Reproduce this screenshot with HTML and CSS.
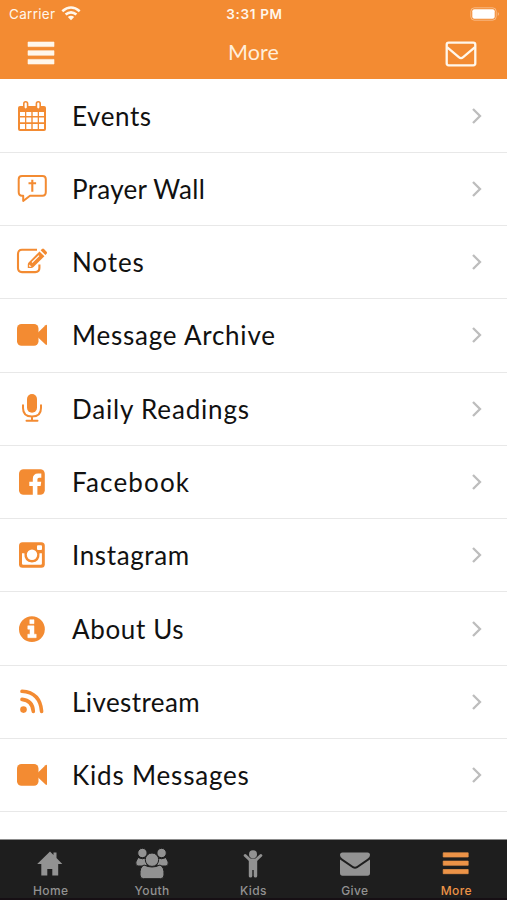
FILE: index.html
```html
<!DOCTYPE html>
<html lang="en">
<head>
<meta charset="utf-8">
<title>More</title>
<link rel="stylesheet" href="styles.css">
</head>
<body>
<svg class="defs" aria-hidden="true">
  <symbol id="video" viewBox="0 0 32 32"><rect x="1" y="5" width="21.5" height="21.7" rx="4.5" fill="currentColor"/><path d="M21 14.5L29.5 6.2Q31 5.2 31 7V25Q31 26.5 29.5 25.5L21 17.5Z" fill="currentColor"/></symbol>
</svg>
<div class="app">
  <header class="header">
    <div class="status">
      <div class="carrier"><span>Carrier</span>
        <svg class="wifi" viewBox="0 0 20 15"><path d="M1.3 5.2Q10-2.2 18.7 5.2M4.6 8.6Q10 4 15.4 8.6" fill="none" stroke="currentColor" stroke-width="2.6"/><path d="M6.8 11Q10 8.4 13.2 11L10 14.2Z" fill="currentColor"/></svg>
      </div>
      <div class="clock">3:31 PM</div>
      <svg class="battery" viewBox="0 0 30 14"><rect x=".8" y=".8" width="25.4" height="12.4" rx="3.6" fill="none" stroke="#fff" stroke-opacity=".4" stroke-width="1"/><rect x="2.3" y="2.2" width="22.4" height="9.6" rx="2" fill="#fff"/><path d="M27.8 5Q29.8 7 27.8 9Z" fill="#fff" opacity=".5"/></svg>
    </div>
    <nav class="navbar">
      <svg class="menu" viewBox="0 0 28 24"><path d="M1 1h26v4.6H1zM1 9.7h26v4.6H1zM1 18.4h26V23H1z" fill="currentColor" stroke="currentColor" stroke-width=".6" stroke-linejoin="round"/></svg>
      <h1 class="title">More</h1>
      <svg class="mail" viewBox="0 0 32 26"><rect x="1.7" y="1.7" width="28.6" height="22.6" rx="2" fill="none" stroke="currentColor" stroke-width="2.3"/><path d="M2 6.2L13.8 16.2Q16 18 18.2 16.2L30 6.2" fill="none" stroke="currentColor" stroke-width="2.3"/></svg>
    </nav>
  </header>
  <main class="list">
    <a class="row"><svg class="icon" viewBox="0 0 32 32"><path d="M4 6h24q2 0 2 2v21q0 2-2 2H4q-2 0-2-2V8q0-2 2-2Z" fill="currentColor"/><path d="M4 12h5v4H4zM10.3 12h5v4h-5zM16.7 12h5v4h-5zM23 12h5v4h-5zM4 17.5h5v4.7H4zM10.3 17.5h5v4.7h-5zM16.7 17.5h5v4.7h-5zM23 17.5h5v4.7h-5zM4 24h5v5H4zM10.3 24h5v5h-5zM16.7 24h5v5h-5zM23 24h5v5h-5z" fill="#fff"/><g fill="#fff" stroke="currentColor" stroke-width="1.6"><rect x="7.8" y="1.8" width="3.8" height="7.4" rx="1.9"/><rect x="20.4" y="1.8" width="3.8" height="7.4" rx="1.9"/></g></svg><span class="label events">Events</span><svg class="chevron" viewBox="0 0 12 18"><path d="M2 2L9 9L2 16"/></svg></a>
    <a class="row"><svg class="icon" viewBox="0 0 32 32"><path d="M6 3H26.5Q29.8 3 29.8 6.3V19Q29.8 22.7 26.5 22.7H14L7.2 28V22.7H6Q2.7 22.7 2.7 19V6.3Q2.7 3 6 3Z" fill="none" stroke="currentColor" stroke-width="2" stroke-linejoin="round"/><path d="M16.3 6.8V18.8M12.5 10.3H20.1" fill="none" stroke="currentColor" stroke-width="2.1"/></svg><span class="label prayer">Prayer Wall</span><svg class="chevron" viewBox="0 0 12 18"><path d="M2 2L9 9L2 16"/></svg></a>
    <a class="row"><svg class="icon" viewBox="0 0 32 32"><path d="M21 3.8H6Q2 3.8 2 8V22Q2 26.1 6 26.1H19.2Q23.4 26.1 23.4 22V18.6" fill="none" stroke="currentColor" stroke-width="2.1"/><path d="M23.5 5.4L28.4 10.3L17.2 21.3Q16.4 22 15.2 22H11.8V18.5Q11.8 17.2 12.6 16.4ZM24.6 4.3L26 3Q27 2.1 28 3L30.6 5.7Q31.5 6.7 30.6 7.7L29.4 9.1Z" fill="currentColor"/><path d="M16 16.5L23 9.6" stroke="#fff" stroke-width="1.1"/><path d="M13.2 18.5L15.6 20.8H13.2Z" fill="#fff"/></svg><span class="label notes">Notes</span><svg class="chevron" viewBox="0 0 12 18"><path d="M2 2L9 9L2 16"/></svg></a>
    <a class="row"><svg class="icon"><use href="#video"/></svg><span class="label archive">Message Archive</span><svg class="chevron" viewBox="0 0 12 18"><path d="M2 2L9 9L2 16"/></svg></a>
    <a class="row"><svg class="icon" viewBox="0 0 32 32"><rect x="11" y="1" width="10" height="18.8" rx="5" fill="currentColor"/><path d="M7 12.2V15Q7 23.6 16 23.6T25 15V12.2M16 23.6V27.5M10.5 27.7H21.5" fill="none" stroke="currentColor" stroke-width="2" stroke-linecap="round"/></svg><span class="label daily">Daily Readings</span><svg class="chevron" viewBox="0 0 12 18"><path d="M2 2L9 9L2 16"/></svg></a>
    <a class="row"><svg class="icon" viewBox="0 0 32 32"><rect x="3" y="3.3" width="25.8" height="25.5" rx="4.5" fill="currentColor"/><path d="M16.8 29V20H13.3V15.7H16.8V13Q16.8 7.5 22.2 7.5H25.3V11.7H23Q21.4 11.7 21.4 13.4V15.7H25.2L24.6 20H21.4V29Z" fill="#fff"/></svg><span class="label facebook">Facebook</span><svg class="chevron" viewBox="0 0 12 18"><path d="M2 2L9 9L2 16"/></svg></a>
    <a class="row"><svg class="icon" viewBox="0 0 32 32"><rect x="3" y="3.3" width="25.8" height="25.5" rx="3.5" fill="currentColor"/><path d="M6 14.2H8.4Q7.8 22.7 16 23.5Q24.2 22.7 23.5 14.2H25.9V24.6Q25.9 25.8 24.7 25.8H7.2Q6 25.8 6 24.6Z" fill="#fff"/><circle cx="16" cy="15.8" r="5.2" fill="#fff"/><rect x="21" y="6.3" width="5" height="4.8" rx="1" fill="#fff"/></svg><span class="label instagram">Instagram</span><svg class="chevron" viewBox="0 0 12 18"><path d="M2 2L9 9L2 16"/></svg></a>
    <a class="row"><svg class="icon" viewBox="0 0 32 32"><circle cx="15.9" cy="16.2" r="12.9" fill="currentColor"/><path d="M13.8 6.7h4.2v4h-4.2zM11.8 12.8H18V21.2H20.2V24.7H11.8V21.2H14V16.2H11.8Z" fill="#fff" stroke="#fff" stroke-width=".5" stroke-linejoin="round"/></svg><span class="label about">About Us</span><svg class="chevron" viewBox="0 0 12 18"><path d="M2 2L9 9L2 16"/></svg></a>
    <a class="row"><svg class="icon" viewBox="0 0 32 32"><circle cx="7.5" cy="23.6" r="3.3" fill="currentColor"/><path d="M6 13.4Q16.5 14.3 17.3 25.4M6 5.3Q24.2 6.5 25.6 25.4" fill="none" stroke="currentColor" stroke-width="3.6" stroke-linecap="round"/></svg><span class="label live">Livestream</span><svg class="chevron" viewBox="0 0 12 18"><path d="M2 2L9 9L2 16"/></svg></a>
    <a class="row"><svg class="icon"><use href="#video"/></svg><span class="label kids">Kids Messages</span><svg class="chevron" viewBox="0 0 12 18"><path d="M2 2L9 9L2 16"/></svg></a>
  </main>
  <nav class="tabs">
    <a class="tab"><svg viewBox="0 0 34 34"><path d="M16 3.5L19.5 7V4.5H22.5V10L28.3 16H24.2V27.5H18.3V21H13.3V27.5H7.3V16H3.2Z" fill="currentColor"/></svg><span>Home</span></a>
    <a class="tab"><svg viewBox="0 0 34 34"><g fill="currentColor" stroke="#1e1e1e" stroke-width="1"><circle cx="7.4" cy="5" r="4.7"/><circle cx="26.6" cy="5" r="4.7"/><path d="M3 9.5Q7.4 12 12 9.5V18H3Q.3 18 .8 14ZM31 9.5Q26.6 12 22 9.5V18H31Q33.7 18 33.2 14Z"/><path d="M9 17Q17 21 25 17Q29.5 19 29 27Q29 30.7 25.5 30.7H8.5Q5 30.7 5 27Q4.5 19 9 17Z"/><circle cx="17" cy="11.7" r="6.7"/></g></svg><span>Youth</span></a>
    <a class="tab"><svg viewBox="0 0 34 34"><circle cx="17" cy="6.3" r="4" fill="currentColor"/><path d="M9.2 7.5L14 12H20L24.8 7.5" fill="none" stroke="currentColor" stroke-width="3" stroke-linecap="round" stroke-linejoin="round"/><path d="M12.8 11H21.2V28Q21.2 29.5 19.5 29.5T17.7 28V22H16.3V28Q16.3 29.5 14.5 29.5T12.8 28Z" fill="currentColor"/></svg><span>Kids</span></a>
    <a class="tab"><svg viewBox="0 0 34 34"><path d="M4.5 4.5H29.5Q32 4.5 32 7Q32 9 29.5 10.8L19 18Q17 19.4 15 18L4.5 10.8Q2 9 2 7Q2 4.5 4.5 4.5ZM2 11.5L14.5 20Q17 21.5 19.5 20L32 11.5V25Q32 27.8 29.5 27.8H4.5Q2 27.8 2 25Z" fill="currentColor"/></svg><span>Give</span></a>
    <a class="tab active"><svg viewBox="0 0 34 34"><path d="M4.2 4.8h25v4.2h-25zM4.2 13.1h25v4.2h-25zM4.2 21.5h25v4.2h-25z" fill="currentColor" stroke="currentColor" stroke-width=".7" stroke-linejoin="round"/></svg><span>More</span></a>
  </nav>
</div>
</body>
</html>
```
FILE: styles.css
```css
* { box-sizing: border-box; }
body { margin: 0; background: #fff; font-family: Lato, "Liberation Sans", sans-serif; }
.defs { display: none; }
.app { display: flex; flex-direction: column; width: 507px; height: 900px; overflow: hidden; }
.header { height: 79px; background: #f38b32; color: #fff7ec; flex: none; }
.status { display: grid; grid-template-columns: 1fr auto 1fr; align-items: center; height: 27px; padding: 0 7px 0 9px; font-family: Inter, sans-serif; font-size: 13.5px; }
.carrier { display: flex; align-items: center; gap: 6px; letter-spacing: .3px; }
.wifi { width: 20px; height: 15px; margin-top: -1px; }
.clock { font-weight: 600; font-size: 13.5px; letter-spacing: .65px; }
.battery { width: 30px; height: 14px; justify-self: end; }
.navbar { display: grid; grid-template-columns: 1fr auto 1fr; align-items: center; height: 52px; padding: 0 29px 0 27px; }
.menu { width: 28px; height: 24px; margin-top: -1px; }
.mail { width: 32px; height: 26px; margin: 1px 1px 0 0; justify-self: end; }
.title { margin: -2px 0 0 2px; font-size: 21.5px; font-weight: 400; letter-spacing: .1px; color: #ffeeda; }
.list { flex: 1; padding-top: .4px; }
.row { display: flex; align-items: center; height: 73.3px; padding: 0 24px 0 16px; border-bottom: 1.3px solid #e8e8e8; color: #f38b32; }
.icon { width: 32px; height: 32px; flex: none; }
.label { margin-left: 24px; flex: 1; color: #111; font-size: 26px; line-height: 32px; white-space: nowrap; }
.events { letter-spacing: .6px; }
.prayer { letter-spacing: .3px; }
.notes { letter-spacing: .9px; }
.archive { letter-spacing: .77px; }
.daily { letter-spacing: .82px; }
.facebook { letter-spacing: 1.15px; }
.instagram { letter-spacing: .62px; }
.about { letter-spacing: .65px; }
.live { letter-spacing: .42px; }
.kids { letter-spacing: .81px; }
.chevron { width: 12px; height: 18px; fill: none; stroke: #bdbdbd; stroke-width: 2.3; }
.tabs { display: grid; grid-template-columns: repeat(5, 1fr); height: 61px; flex: none; background: #1e1e1e; border-top: 1px solid #8c8c8c; border-bottom: 2px solid #160f14; }
.tab { display: flex; flex-direction: column; align-items: center; padding-top: 8px; color: #929292; font: 500 12px/18px Inter, sans-serif; letter-spacing: .4px; }
.tab svg { width: 34px; height: 34px; }
.active { color: #ec9347; }
```
